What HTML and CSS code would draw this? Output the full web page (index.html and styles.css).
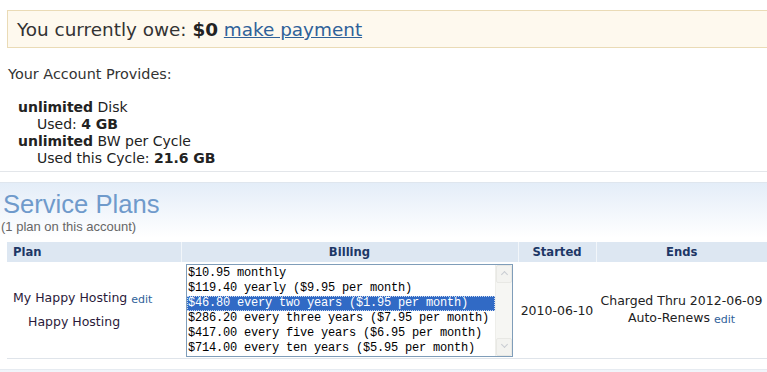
FILE: index.html
```html
<!DOCTYPE html>
<html lang="en">
<head>
    <meta charset="UTF-8">
    <meta name="viewport" content="width=device-width, initial-scale=1.0">
    <title>Account Overview</title>
    <link rel="stylesheet" href="styles.css">
</head>
<body>
    <div class="owe">
        You currently owe: <b>$0</b> <a href="#">make payment</a>
    </div>

    <div class="account">
        <p class="provides">Your Account Provides:</p>
        <div class="quota">
            <div><b>unlimited</b> Disk</div>
            <div class="used">Used: <b>4 GB</b></div>
            <div><b>unlimited</b> BW per Cycle</div>
            <div class="used">Used this Cycle: <b>21.6 GB</b></div>
        </div>
    </div>

    <div class="plans">
        <h2>Service Plans</h2>
        <div class="count">(1 plan on this account)</div>
        <table class="plan-table">
            <colgroup>
                <col class="col-plan">
                <col class="col-billing">
                <col class="col-started">
                <col class="col-ends">
            </colgroup>
            <thead>
                <tr>
                    <th class="th-plan">Plan</th>
                    <th>Billing</th>
                    <th>Started</th>
                    <th>Ends</th>
                </tr>
            </thead>
            <tbody>
                <tr>
                    <td class="plan-name">
                        <div>My Happy Hosting <a class="small" href="#">edit</a></div>
                        <div class="sub">Happy Hosting</div>
                    </td>
                    <td class="billing">
                        <div class="listbox" role="listbox">
                            <div class="options">
                                <div class="option">$10.95 monthly</div>
                                <div class="option">$119.40 yearly ($9.95 per month)</div>
                                <div class="option selected">$46.80 every two years ($1.95 per month)</div>
                                <div class="option">$286.20 every three years ($7.95 per month)</div>
                                <div class="option">$417.00 every five years ($6.95 per month)</div>
                                <div class="option">$714.00 every ten years ($5.95 per month)</div>
                            </div>
                            <div class="scrollbar">
                                <span class="arrow up"></span>
                                <span class="arrow down"></span>
                            </div>
                        </div>
                    </td>
                    <td class="started">2010-06-10</td>
                    <td class="ends">
                        <div>Charged Thru 2012-06-09</div>
                        <div>Auto-Renews <a class="small" href="#">edit</a></div>
                    </td>
                </tr>
            </tbody>
        </table>
    </div>
    <div class="next"></div>
</body>
</html>
```
FILE: styles.css
```css
body {
    margin: 0;
    font-family: "DejaVu Sans", Verdana, sans-serif;
    font-size: 14px;
    color: #222;
    background-color: #fff;
    overflow: hidden;
}
a {
    color: #2f6199;
}
.owe {
    margin: 10px 0 0 7px;
    height: 36px;
    line-height: 37px;
    padding-left: 9px;
    font-size: 18.4px;
    color: #333;
    background-color: #fef9ee;
    border-top: 1px solid #eadbb6;
    border-bottom: 1px solid #eadbb6;
    border-left: 1px solid #eadbb6;
}
.owe b {
    color: #222;
}
.account {
    padding: 0 8px 4px 8px;
    border-bottom: 1px solid #e3e6ea;
}
.provides {
    margin: 0;
    padding-top: 18px;
    font-size: 14.4px;
    line-height: 17px;
    color: #333;
}
.quota {
    padding: 16px 0 0 10px;
    line-height: 17px;
}
.quota .used {
    padding-left: 19px;
}
.plans {
    margin-top: 10px;
    border-top: 1px solid #dfe6ee;
    background: linear-gradient(#e4edf8 0px, #ffffff 55px);
}
.plans h2 {
    margin: 0;
    padding: 6px 0 0 3px;
    font-family: "Liberation Sans", Arial, sans-serif;
    font-weight: normal;
    font-size: 25.6px;
    line-height: 30px;
    color: #6f9acb;
}
.count {
    padding-left: 1px;
    font-family: "Liberation Sans", Arial, sans-serif;
    font-size: 13px;
    line-height: 15px;
    color: #666;
}
.plan-table {
    margin: 8px 0 0 7px;
    width: 760px;
    table-layout: fixed;
    border-collapse: collapse;
}
.col-plan {
    width: 174px;
}
.col-billing {
    width: 337px;
}
.col-started {
    width: 78px;
}
.col-ends {
    width: 171px;
}
.plan-table th {
    height: 20px;
    padding: 0;
    background-color: #dde7f2;
    color: #1d3766;
    font-size: 11.6px;
    font-weight: bold;
    border-left: 1px solid #f2f6fa;
}
.plan-table th.th-plan {
    border-left: none;
    padding-left: 6px;
    text-align: left;
}
.plan-table td {
    padding: 0;
    height: 96px;
    font-size: 12.5px;
    white-space: nowrap;
    border-bottom: 1px solid #dfe4ea;
}
.plan-name {
    padding-left: 6px !important;
    line-height: 22px;
    color: #2a1a3a;
}
.plan-name .sub {
    padding-left: 15px;
}
.small {
    font-size: 11px;
    text-decoration: none;
    vertical-align: -1px;
}
.billing {
    text-align: center;
}
.listbox {
    display: inline-flex;
    width: 325px;
    height: 91px;
    vertical-align: middle;
    border: 1px solid #7f9db9;
    background-color: #fff;
    text-align: left;
}
.options {
    flex: 1;
    min-width: 0;
    overflow: hidden;
    padding-top: 1px;
    font-family: "Liberation Mono", "Courier New", monospace;
    font-size: 12px;
    letter-spacing: -0.2px;
    color: #000;
}
.option {
    height: 15px;
    line-height: 15px;
    padding-left: 1px;
}
.option.selected {
    background-color: #316ac5;
    color: #fff;
    outline: 1px dotted #c9d8f0;
    outline-offset: -1px;
}
.scrollbar {
    width: 16px;
    display: flex;
    flex-direction: column;
    justify-content: space-between;
    background-color: #f6f6f3;
    border-left: 1px solid #eeeeea;
}
.arrow {
    height: 16px;
    border: 1px solid #e8e8e4;
    border-radius: 2px;
    background-color: #f3f3f0;
    position: relative;
}
.arrow::after {
    content: "";
    position: absolute;
    left: 5px;
    width: 4px;
    height: 4px;
    border-left: 1px solid #c8ccd2;
    border-top: 1px solid #c8ccd2;
}
.arrow.up::after {
    top: 6px;
    transform: rotate(45deg);
}
.arrow.down::after {
    top: 3px;
    transform: rotate(-135deg);
}
.started {
    text-align: center;
    color: #222;
}
.ends {
    text-align: center;
    color: #222;
    line-height: 17px;
}
.next {
    margin-top: 10px;
    border-top: 1px solid #e6ebf1;
    height: 20px;
    background: linear-gradient(#f0f4fa, #ffffff);
}
```
